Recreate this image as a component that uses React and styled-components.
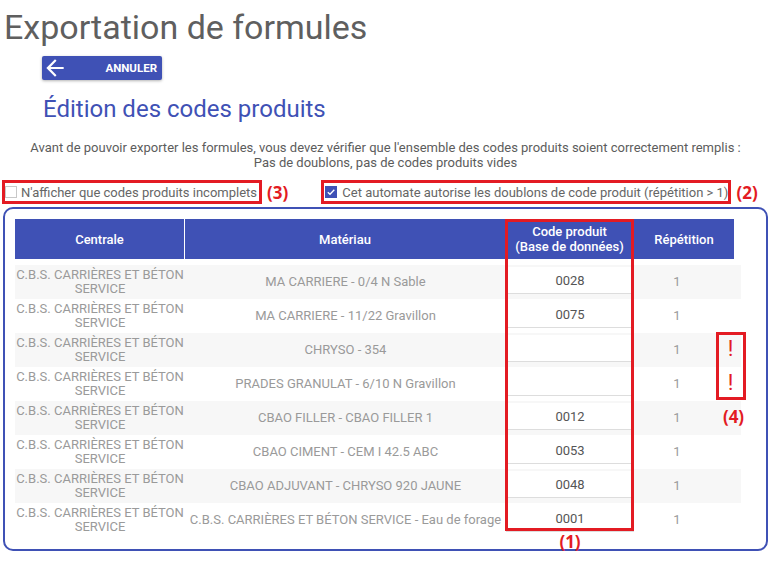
import styled, { createGlobalStyle } from 'styled-components';

const GlobalStyle = createGlobalStyle`
    body {
        margin: 0;
        background: #fff;
        font-family: Roboto, "Liberation Sans", sans-serif;
    }
`;

const INDIGO = '#3f51b5';
const MARK = '#e31b23';

const rows = [
    { materiau: 'MA CARRIERE - 0/4 N Sable', code: '0028' },
    { materiau: 'MA CARRIERE - 11/22 Gravillon', code: '0075' },
    { materiau: 'CHRYSO - 354', code: '' },
    { materiau: 'PRADES GRANULAT - 6/10 N Gravillon', code: '' },
    { materiau: 'CBAO FILLER - CBAO FILLER 1', code: '0012' },
    { materiau: 'CBAO CIMENT - CEM I 42.5 ABC', code: '0053' },
    { materiau: 'CBAO ADJUVANT - CHRYSO 920 JAUNE', code: '0048' },
    { materiau: 'C.B.S. CARRIÈRES ET BÉTON SERVICE - Eau de forage', code: '0001' },
];

const Page = styled.div`
    width: 781px;
    height: 561px;
    overflow: hidden;
`;

const Title = styled.h1`
    margin: 7px 0 0 4px;
    font-size: 34px;
    font-weight: 400;
    line-height: normal;
    color: #5f5f5f;
`;

const BackButton = styled.button`
    display: flex;
    align-items: center;
    justify-content: space-between;
    width: 120px;
    height: 24px;
    margin: 9px 0 0 42px;
    padding: 0 5px 0 0;
    border: none;
    border-radius: 2px;
    background: ${INDIGO};
    box-shadow: 0 1px 3px rgba(0, 0, 0, 0.3);
    color: #fff;
    font-family: Roboto, "Liberation Sans", sans-serif;
    font-size: 11.5px;
    font-weight: 700;
    cursor: pointer;
`;

const SubTitle = styled.h2`
    margin: 15px 0 0 43px;
    font-size: 24px;
    font-weight: 400;
    line-height: normal;
    color: ${INDIGO};
`;

const Intro = styled.p`
    width: 763px;
    margin: 17px 0 0 4px;
    font-size: 13px;
    line-height: 15px;
    text-align: center;
    color: #5c5c5c;
`;

const Options = styled.div`
    display: flex;
    align-items: center;
    margin: 13px 0 0 5px;
    height: 18px;
`;

const Option = styled.label`
    display: flex;
    align-items: center;
    gap: ${p => p.$gap}px;
    height: 18px;
    padding: 0 ${p => p.$right}px 0 ${p => p.$left}px;
    margin-left: ${p => p.$offset}px;
    outline: 3px solid ${MARK};
    font-size: 13px;
    color: #666;
`;

const Box = styled.span`
    display: flex;
    align-items: center;
    justify-content: center;
    width: 12px;
    height: 12px;
    box-sizing: border-box;
    border: 1px solid ${p => (p.$checked ? INDIGO : '#c8c8c8')};
    background: ${p => (p.$checked ? INDIGO : '#fff')};
`;

const Mark = styled.span`
    font-family: "Open Sans", "Liberation Sans", sans-serif;
    font-size: 17px;
    font-weight: 700;
    line-height: 17px;
    color: ${MARK};
    margin-left: ${p => p.$offset || 0}px;
`;

const Card = styled.div`
    width: 765px;
    height: 344px;
    box-sizing: border-box;
    margin: 6px 0 0 3px;
    padding: 10px 0 0 10px;
    border: 2px solid ${INDIGO};
    border-radius: 10px;
`;

const Grid = styled.div`
    display: grid;
    grid-template-columns: 170px 321px 128px 86px 14px 7px;
    grid-template-rows: 40px 6px repeat(8, 34px) 12px;
`;

const Head = styled.div`
    grid-row: 1;
    grid-column: ${p => p.$col};
    display: flex;
    align-items: center;
    justify-content: center;
    border-right: ${p => (p.$last ? 'none' : '1px solid #fff')};
    background: ${INDIGO};
    color: #fff;
    font-size: 13px;
    font-weight: 500;
    line-height: 15px;
    text-align: center;
`;

const Cell = styled.div`
    grid-row: ${p => p.$row};
    grid-column: ${p => p.$col};
    display: flex;
    align-items: center;
    justify-content: center;
    background: ${p => (p.$striped ? '#f7f7f7' : '#fff')};
    font-size: 13px;
    line-height: 14px;
    text-align: center;
    color: #9a9a9a;
`;

const CodeInput = styled.input`
    align-self: flex-start;
    width: 100%;
    height: 27px;
    margin-top: 2px;
    box-sizing: border-box;
    padding: 0;
    border: none;
    border-bottom: 1px solid #ddd;
    background: #fff;
    outline: none;
    font-family: Roboto, "Liberation Sans", sans-serif;
    font-size: 13px;
    text-align: center;
    color: #555;
`;

const Warning = styled.span`
    margin-top: -3px;
    font-size: 22px;
    font-weight: 400;
    color: ${MARK};
`;

const Highlight = styled.div`
    grid-row: ${p => p.$rows};
    grid-column: ${p => p.$col};
    margin: ${p => p.$margin};
    border: 3px solid ${MARK};
    z-index: 1;
    pointer-events: none;
`;

const Callout = styled.div`
    grid-row: ${p => p.$row};
    grid-column: ${p => p.$col};
    display: flex;
    justify-content: center;
    align-items: flex-start;
    margin-top: ${p => p.$top}px;
    padding-left: ${p => p.$shift || 0}px;
    z-index: 1;
`;

const ArrowBack = () => (
    <svg width="26" height="26" viewBox="0 0 24 24" fill="#fff">
        <path d="M20 11H7.83l5.59-5.59L12 4l-8 8 8 8 1.41-1.41L7.83 13H20v-2z" />
    </svg>
);

const Check = () => (
    <svg width="10" height="10" viewBox="0 0 10 10" fill="none" stroke="#fff" strokeWidth="1.3">
        <path d="M1.8 5.2l2.2 2.1 4.3-4.6" />
    </svg>
);

const App = () => {
    return (
        <Page>
            <GlobalStyle />
            <Title>Exportation de formules</Title>
            <BackButton>
                <ArrowBack />
                ANNULER
            </BackButton>
            <SubTitle>Édition des codes produits</SubTitle>
            <Intro>
                Avant de pouvoir exporter les formules, vous devez vérifier que l'ensemble des codes produits soient correctement remplis :
                <br />
                Pas de doublons, pas de codes produits vides
            </Intro>
            <Options>
                <Option $gap={4} $left={0} $right={2} $offset={0}>
                    <Box />
                    N'afficher que codes produits incomplets
                </Option>
                <Mark $offset={8}>(3)</Mark>
                <Option $gap={5} $left={1} $right={0} $offset={36}>
                    <Box $checked>
                        <Check />
                    </Box>
                    Cet automate autorise les doublons de code produit (répétition &gt; 1)
                </Option>
                <Mark $offset={8}>(2)</Mark>
            </Options>
            <Card>
                <Grid>
                    <Head $col={1}>Centrale</Head>
                    <Head $col={2}>Matériau</Head>
                    <Head $col={3}>Code produit<br />(Base de données)</Head>
                    <Head $col="4 / 6" $last>Répétition</Head>
                    {rows.map((r, i) => {
                        const row = i + 3;
                        const striped = i % 2 === 0;
                        return [
                            <Cell key={`c${i}`} $row={row} $col={1} $striped={striped}>
                                C.B.S. CARRIÈRES ET BÉTON<br />SERVICE
                            </Cell>,
                            <Cell key={`m${i}`} $row={row} $col={2} $striped={striped}>
                                {r.materiau}
                            </Cell>,
                            <Cell key={`p${i}`} $row={row} $col={3} $striped={striped}>
                                <CodeInput defaultValue={r.code} />
                            </Cell>,
                            <Cell key={`r${i}`} $row={row} $col={4} $striped={striped}>
                                1
                            </Cell>,
                            <Cell key={`w${i}`} $row={row} $col="5 / 7" $striped={striped}>
                                {!r.code && <Warning>!</Warning>}
                            </Cell>,
                        ];
                    })}
                    <Highlight $rows="1 / 11" $col={3} $margin="0 0 6px -1px" />
                    <Highlight $rows="5 / 7" $col="5 / 7" $margin="-1px -5px 1px -4px" />
                    <Callout $row={11} $col={3} $top={-4}>
                        <Mark>(1)</Mark>
                    </Callout>
                    <Callout $row={7} $col="5 / 7" $top={7} $shift={6}>
                        <Mark>(4)</Mark>
                    </Callout>
                </Grid>
            </Card>
        </Page>
    );
};

export default App;
